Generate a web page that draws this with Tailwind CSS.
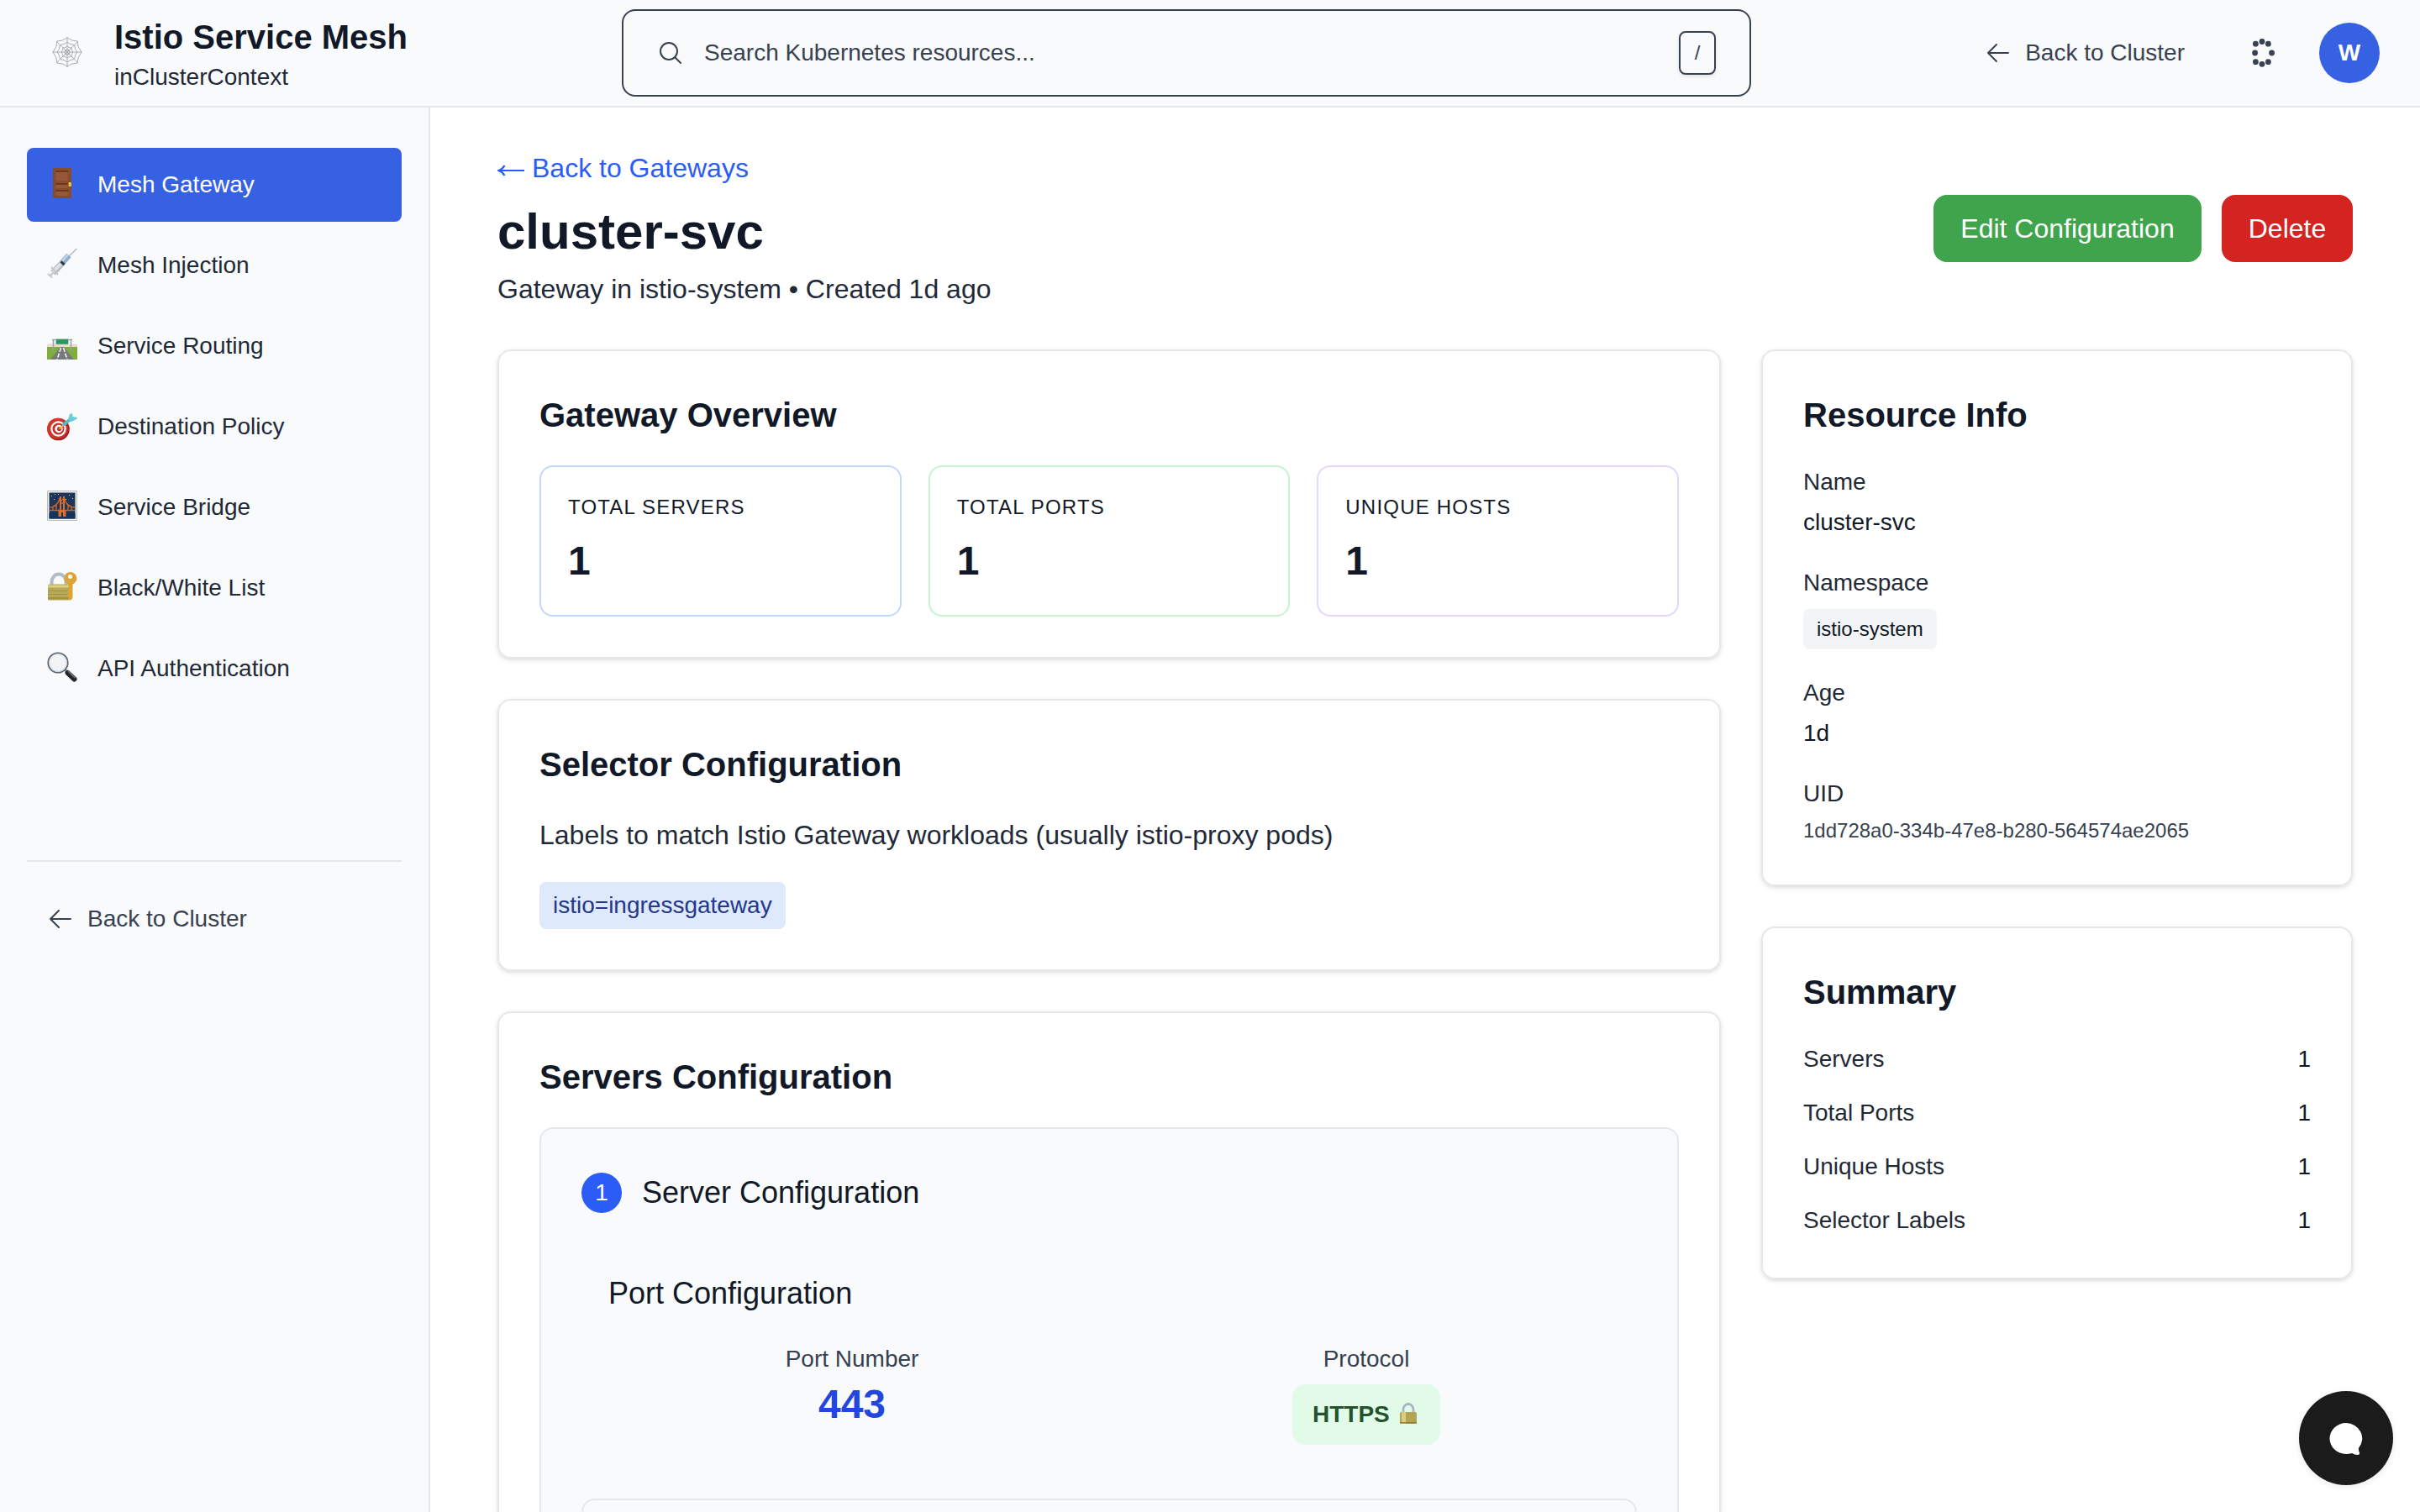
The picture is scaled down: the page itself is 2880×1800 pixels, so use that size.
<!DOCTYPE html>
<html lang="en">
<head>
<meta charset="utf-8">
<title>Istio Service Mesh</title>
<script src="https://cdn.jsdelivr.net/npm/@tailwindcss/browser@4"></script>
</head>
<body class="h-[1800px] w-[2880px] overflow-hidden bg-white font-['Liberation_Sans',Arial,sans-serif] text-[28px] leading-10 text-[#1f2937]">

<header class="flex h-32 items-start border-b-2 border-[#e5e7eb] bg-[#f9fafc]">
  <div class="flex w-[740px] items-center pl-[62px] pt-1">
    <svg class="mt-2 size-9" viewBox="0 0 36 36" fill="none" stroke="#a9acb0" stroke-width="1">
      <path d="M18 0v36M0 18h36M5 5l26 26M31 5 5 31M18 1q5 4 12 4q0 7 5 13q-5 6-5 13q-7 0-12 4q-5-4-12-4q0-7-5-13q5-6 5-13q7 0 12-4ZM18 6q3 3 8.500 3.500Q27 15 30 18q-3 3-3.500 8.500Q21 27 18 30q-3-3-8.500-3.500Q9 21 6 18q3-3 3.500-8.500Q15 9 18 6ZM18 11q2 2 5 2q0 3 2 5q-2 2-2 5q-3 0-5 2q-2-2-5-2q0-3-2-5q2-2 2-5q3 0 5-2Z"/>
      <circle cx="18" cy="18" r="3"/>
    </svg>
    <div class="ml-[38px] mt-3">
      <h1 class="text-[40px] font-bold leading-[56px] text-[#111827]">Istio Service Mesh</h1>
      <p>inClusterContext</p>
    </div>
  </div>
  <div class="mt-[11px] flex h-[104px] w-[1344px] items-center rounded-2xl border-2 border-[#374151] pl-[40px] pr-[40px] text-[#374151]">
    <svg class="size-8" viewBox="0 0 24 24" fill="none" stroke="currentColor" stroke-width="1.5" stroke-linecap="round" stroke-linejoin="round"><path d="m21 21-5.197-5.197m0 0A7.500 7.500 0 1 0 5.196 5.196a7.500 7.500 0 0 0 10.607 10.607Z"/></svg>
    <span class="ml-6 grow">Search Kubernetes resources...</span>
    <kbd class="flex h-[52px] w-11 items-center justify-center rounded-lg border-2 border-[#374151] font-['Liberation_Sans'] text-[24px] leading-8 shadow-[0_2px_4px_rgba(0,0,0,0.1)]">/</kbd>
  </div>
  <div class="flex h-[126px] grow items-center justify-end pr-12 text-[#374151]">
    <svg class="size-8" viewBox="0 0 24 24" fill="none" stroke="currentColor" stroke-width="1.5" stroke-linecap="round" stroke-linejoin="round"><path d="M10.500 19.500 3 12m0 0 7.500-7.500M3 12h18"/></svg>
    <span class="ml-4 mr-[74px]">Back to Cluster</span>
    <svg class="mr-[50px] size-9" viewBox="0 0 36 36" fill="currentColor"><circle cx="18" cy="4.500" r="3.400"/><circle cx="18" cy="31.300" r="3.400"/><circle cx="9.600" cy="18" r="3.400"/><circle cx="29.600" cy="18" r="3.400"/><circle cx="10.400" cy="7.200" r="3.400"/><circle cx="25.400" cy="7.200" r="3.400"/><circle cx="10.400" cy="28.700" r="3.400"/><circle cx="25.400" cy="28.700" r="3.400"/></svg>
    <div class="flex size-[72px] items-center justify-center rounded-full bg-[#3761e3] font-bold text-white">W</div>
  </div>
</header>

<div class="flex h-[1672px]">
  <aside class="w-[512px] shrink-0 border-r-2 border-[#e5e7eb] bg-[#f9fafc] px-8 pt-12">
    <nav class="flex w-[446px] flex-col gap-2">
      <a class="flex h-[88px] items-center gap-6 rounded-lg bg-[#3761e3] px-6 text-white">
        <svg class="mb-1 size-9" viewBox="0 0 36 36"><path fill="#8a4b2b" d="M7 0h22v36H7z"/><path fill="#97573a" d="M10.500 3.500h14v12h-14zM10.500 19h14v5h-14zM10.500 27h14v6h-14z"/><path fill="#6b371d" d="M10 3h15v2H10zM10 18h15v2H10zM10 26h15v2H10z"/><rect x="25.500" y="17" width="3.500" height="5" rx="1" fill="#e8c234"/></svg>
        <span>Mesh Gateway</span>
      </a>
      <a class="flex h-[88px] items-center gap-6 px-6">
        <svg class="mb-1 size-9" viewBox="0 0 36 36"><path stroke="#a5b4bf" stroke-width="1.200" d="m26 9 9.500-9"/><path stroke="#b4babf" stroke-width="7.500" d="m7 29 12-13"/><path stroke="#dfe3e7" stroke-width="4" d="m6 29 13-14"/><path stroke="#8fb0cf" stroke-width="7" d="m18 17 8-9"/><path stroke="#c2d9ec" stroke-width="2.500" d="m17 16 8-9"/><path stroke="#2d3b51" stroke-width="3" d="m16.500 15.500 4 3.500"/><path fill="none" stroke="#c3c7cb" stroke-width="2" d="m5 22 8 9M1 30l5 4.500M4 32l4-4"/></svg>
        <span>Mesh Injection</span>
      </a>
      <a class="flex h-[88px] items-center gap-6 px-6">
        <svg class="size-9" viewBox="0 0 36 36"><path fill="#ecd9d3" d="M0 16q5-2 10 0q8-1 16 0q5-1 10 0v4H0z"/><path fill="#7fae3c" d="M0 19h36v15H0z"/><path fill="#77797b" d="M16 19h4l12 15H4z"/><path stroke="#fff" stroke-width="1.500" stroke-dasharray="5 2" d="m16.500 20-4.500 14M19.500 20l4.500 14"/><path stroke="#9c9fa2" stroke-width="1.500" d="M7.500 10v14M28.500 10v14M6 10.500h24"/><path fill="#2f9560" stroke="#bfe0cf" stroke-width=".6" d="M10.500 9.500h15v6.500h-15z"/></svg>
        <span>Service Routing</span>
      </a>
      <a class="flex h-[88px] items-center gap-6 px-6">
        <svg class="size-9" viewBox="0 0 36 36"><circle cx="13.500" cy="21" r="13.300" fill="#a3211c"/><circle cx="12.500" cy="20" r="12.300" fill="#d3352c"/><circle cx="13.500" cy="20.500" r="9.200" fill="#fff"/><circle cx="13.500" cy="20.500" r="7" fill="#c92f28"/><circle cx="14" cy="20.500" r="4.700" fill="#fff"/><circle cx="14.500" cy="20.500" r="2.600" fill="#c92f28"/><path stroke="#e3b53d" stroke-width="2" d="m14.500 20.500 6-5"/><path stroke="#56b9c6" stroke-width="4" d="m19 16 9-7"/><path fill="#6bcbd6" d="m25 9.500 2-6.500 3-1 .5 4L36 7l-1 2-6 3z"/></svg>
        <span>Destination Policy</span>
      </a>
      <a class="flex h-[88px] items-center gap-6 px-6">
        <svg class="mb-1 size-9" viewBox="0 0 36 36"><path fill="#f4f4f2" stroke="#b8babc" d="M.5.500h35v35H.5z"/><path fill="#1d3558" d="M2.500 2.500h31v31h-31z"/><path fill="#14335c" d="M2.500 27h31v6.500h-31z"/><path fill="none" stroke="#c4652c" stroke-width="1.400" d="M2.500 20q10 0 13-12q1 8 4.500 0q3 12 13.500 12M2.500 23.500h31M7 19v4M11 16v7M25 16v7M29 19v4M15 15h6"/><path fill="#dc6e2a" d="M15 7h2v24h-2zM19 7h2v24h-2zM13.500 23h9v8h-2v-5h-5v5h-2z"/><path fill="#e8d372" d="M5 6h1v1H5zM9 4h1v1H9zM8 10h1v1H8zM26 5h1v1h-1zM30 9h1v1h-1zM13 4h1v1h-1zM22 10h1v1h-1z"/></svg>
        <span>Service Bridge</span>
      </a>
      <a class="flex h-[88px] items-center gap-6 px-6">
        <svg class="mb-1 size-9" viewBox="0 0 36 36"><path fill="none" stroke="#b1bcc9" stroke-width="4" d="M5.500 17v-4a8.500 9.500 0 0 1 17 0v4"/><rect x="1" y="15.500" width="26" height="19" rx="1.500" fill="#b8a956"/><path fill="#dccf83" d="M1 16.500h26v3H1z"/><path fill="#a39344" d="M1 23h26v1H1zM1 27h26v1H1zM1 31h26v2.500H1z"/><path fill="#dba636" fill-rule="evenodd" d="M27.500 1a7.500 7.500 0 0 1 3 14.500V32L28 35l-2.500-3v-2l-2-1.500 2-2-2-1.500 2-2v-7.500A7.500 7.500 0 0 1 27.500 1Zm0 3a2.500 2.500 0 1 0 0 5 2.500 2.500 0 0 0 0-5Z"/></svg>
        <span>Black/White List</span>
      </a>
      <a class="flex h-[88px] items-center gap-6 px-6">
        <svg class="mb-1 size-9" viewBox="0 0 36 36"><path stroke="#8b8f93" stroke-width="3" d="m20 20 5 5"/><path stroke="#242628" stroke-width="6" stroke-linecap="round" d="m24.500 25 8 7.500"/><path stroke="#777" stroke-width="1.500" d="m25 23 8.500 8"/><circle cx="13" cy="13" r="11.700" fill="#f1f3f5" stroke="#5d6670" stroke-width="1.800"/><circle cx="13" cy="13" r="10.500" fill="none" stroke="#c6d2dc"/></svg>
        <span>API Authentication</span>
      </a>
    </nav>
    <div class="mt-[184px] w-[446px] border-t-2 border-[#e5e7eb] pt-6">
      <a class="flex h-[88px] items-center gap-4 px-6 text-[#374151]">
        <svg class="size-8" viewBox="0 0 24 24" fill="none" stroke="currentColor" stroke-width="1.500" stroke-linecap="round" stroke-linejoin="round"><path d="M10.500 19.500 3 12m0 0 7.500-7.500M3 12h18"/></svg>
        <span>Back to Cluster</span>
      </a>
    </div>
  </aside>

  <main class="grow px-20 pt-12">
    <div class="flex items-center justify-between text-[32px] leading-[48px]">
      <div>
        <a class="flex items-center gap-[9px] text-[#2b5cf5]">
          <svg class="mt-1.5 h-4 w-8" viewBox="0 0 32 16" fill="none" stroke="currentColor" stroke-width="2.200"><path d="M2 8h30M8.500 2Q6 6.500 1.500 8Q6 9.500 8.500 14"/></svg>
          <span>Back to Gateways</span>
        </a>
        <h2 class="mt-4 text-[60px] font-bold leading-[72px] text-[#111827]">cluster-svc</h2>
        <p class="mt-2">Gateway in istio-system • Created 1d ago</p>
      </div>
      <div class="flex gap-6 text-white">
        <button class="h-20 w-[319px] rounded-2xl bg-[#40a44c]">Edit Configuration</button>
        <button class="h-20 w-[156px] rounded-2xl bg-[#d42422]">Delete</button>
      </div>
    </div>

    <div class="mt-12 flex items-start gap-12">
      <div class="flex w-[1456px] flex-col gap-12">
        <section class="rounded-2xl border-2 border-[#e5e7eb] p-12 shadow-[0_2px_6px_rgba(0,0,0,0.1),0_2px_4px_-2px_rgba(0,0,0,0.1)]">
          <h3 class="text-[40px] font-bold leading-[56px] text-[#111827]">Gateway Overview</h3>
          <div class="mt-8 grid grid-cols-3 gap-8 text-[#111827]">
            <div class="rounded-2xl border-2 border-[#c1d9fc] p-8">
              <p class="text-[24px] uppercase leading-8 tracking-wider">Total Servers</p>
              <p class="mt-4 text-[48px] font-bold leading-[64px]">1</p>
            </div>
            <div class="rounded-2xl border-2 border-[#c4f5d0] p-8">
              <p class="text-[24px] uppercase leading-8 tracking-wider">Total Ports</p>
              <p class="mt-4 text-[48px] font-bold leading-[64px]">1</p>
            </div>
            <div class="rounded-2xl border-2 border-[#e5d6fd] p-8">
              <p class="text-[24px] uppercase leading-8 tracking-wider">Unique Hosts</p>
              <p class="mt-4 text-[48px] font-bold leading-[64px]">1</p>
            </div>
          </div>
        </section>

        <section class="rounded-2xl border-2 border-[#e5e7eb] p-12 shadow-[0_2px_6px_rgba(0,0,0,0.1),0_2px_4px_-2px_rgba(0,0,0,0.1)]">
          <h3 class="text-[40px] font-bold leading-[56px] text-[#111827]">Selector Configuration</h3>
          <p class="mt-8 text-[32px] leading-[48px]">Labels to match Istio Gateway workloads (usually istio-proxy pods)</p>
          <div class="mt-8 flex"><span class="rounded-lg bg-[#dee9fb] px-4 py-2 text-[#24388a]">istio=ingressgateway</span></div>
        </section>

        <section class="h-[596px] rounded-t-2xl border-2 border-b-0 border-[#e5e7eb] px-12 pt-12 shadow-[0_2px_6px_rgba(0,0,0,0.1),0_2px_4px_-2px_rgba(0,0,0,0.1)]">
          <h3 class="text-[40px] font-bold leading-[56px] text-[#111827]">Servers Configuration</h3>
          <div class="mt-8 h-[458px] rounded-t-2xl border-2 border-b-0 border-[#e5e7eb] bg-[#f9fafc] px-12 pt-12">
            <div class="flex items-center gap-6">
              <span class="flex size-12 items-center justify-center rounded-full bg-[#2b5cf5] text-white">1</span>
              <h4 class="text-[36px] leading-[56px] text-[#111827]">Server Configuration</h4>
            </div>
            <div class="mt-8 h-[304px] p-8">
              <h5 class="text-[36px] leading-[56px] text-[#111827]">Port Configuration</h5>
              <div class="mt-[30px] grid grid-cols-2 gap-8">
                <div class="flex flex-col items-center">
                  <p class="text-[#374151]">Port Number</p>
                  <p class="mt-0.5 text-[48px] font-bold leading-[64px] text-[#2347dc]">443</p>
                </div>
                <div class="flex flex-col items-center">
                  <p class="text-[#374151]">Protocol</p>
                  <div class="mt-2.5 flex h-[72px] w-44 items-center rounded-2xl bg-[#e2fbe8] px-6 font-bold text-[#25522e]">
                    <span>HTTPS</span>
                    <svg class="mb-0.5 ml-2.5 h-7 w-6" viewBox="0 0 24 28"><path fill="none" stroke="#aab5c0" stroke-width="2.800" d="M6 13V9a6 6.500 0 0 1 12 0v4"/><rect x="2" y="12" width="20" height="14" rx="1.500" fill="#b3a352"/><path fill="#d9cc84" d="M4 12h5v14H4z"/><path fill="#8e7e35" d="M2 24h20v1.500H2z"/></svg>
                  </div>
                </div>
              </div>
            </div>
            <div class="h-4 rounded-t-2xl border-2 border-b-0 border-[#e5e7eb]"></div>
          </div>
        </section>
      </div>

      <div class="flex w-[704px] flex-col gap-12">
        <section class="rounded-2xl border-2 border-[#e5e7eb] p-12 shadow-[0_2px_6px_rgba(0,0,0,0.1),0_2px_4px_-2px_rgba(0,0,0,0.1)]">
          <h3 class="text-[40px] font-bold leading-[56px] text-[#111827]">Resource Info</h3>
          <dl class="mt-8">
            <dt>Name</dt>
            <dd class="mt-2 text-[#111827]">cluster-svc</dd>
            <dt class="mt-8">Namespace</dt>
            <dd class="mt-[11px] flex text-[24px] leading-8 text-[#111827]"><span class="rounded-lg bg-[#f3f4f6] px-4 py-2">istio-system</span></dd>
            <dt class="mt-8">Age</dt>
            <dd class="mt-2 text-[#111827]">1d</dd>
            <dt class="mt-8">UID</dt>
            <dd class="mt-2 text-[24px] leading-8 text-[#374151]">1dd728a0-334b-47e8-b280-564574ae2065</dd>
          </dl>
        </section>
        <section class="rounded-2xl border-2 border-[#e5e7eb] p-12 shadow-[0_2px_6px_rgba(0,0,0,0.1),0_2px_4px_-2px_rgba(0,0,0,0.1)]">
          <h3 class="text-[40px] font-bold leading-[56px] text-[#111827]">Summary</h3>
          <div class="mt-8 flex flex-col gap-6">
            <div class="flex justify-between"><span>Servers</span><span class="text-[#111827]">1</span></div>
            <div class="flex justify-between"><span>Total Ports</span><span class="text-[#111827]">1</span></div>
            <div class="flex justify-between"><span>Unique Hosts</span><span class="text-[#111827]">1</span></div>
            <div class="flex justify-between"><span>Selector Labels</span><span class="text-[#111827]">1</span></div>
          </div>
        </section>
      </div>
    </div>
  </main>
</div>

<button class="fixed bottom-8 right-8 size-28 rounded-full bg-[#1b1b1b] shadow-[0_2px_8px_rgba(0,0,0,0.08)]">
  <svg class="ml-9 mt-0.5 h-10 w-10" viewBox="0 0 40 40" fill="#fff"><path d="M20 1a19.500 18.500 0 0 1 15 30q-.5 2 1 5.500q.5 2.500-2 2.500-4 0-7-2Q23.500 38 20 38A19.500 18.500 0 0 1 20 1Z"/></svg>
</button>
</body>
</html>
